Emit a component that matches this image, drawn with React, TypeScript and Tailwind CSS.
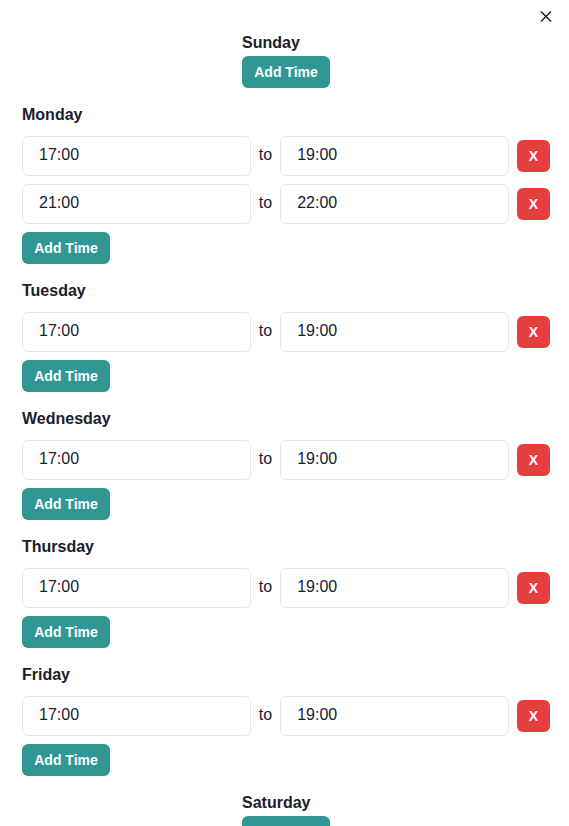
import React, { useState } from "react";

type Slot = { from: string; to: string };

const initial: { day: string; slots: Slot[] }[] = [
  { day: "Sunday", slots: [] },
  { day: "Monday", slots: [{ from: "17:00", to: "19:00" }, { from: "21:00", to: "22:00" }] },
  { day: "Tuesday", slots: [{ from: "17:00", to: "19:00" }] },
  { day: "Wednesday", slots: [{ from: "17:00", to: "19:00" }] },
  { day: "Thursday", slots: [{ from: "17:00", to: "19:00" }] },
  { day: "Friday", slots: [{ from: "17:00", to: "19:00" }] },
  { day: "Saturday", slots: [] },
];

export default function App() {
  const [days, setDays] = useState(initial);

  const addTime = (i: number) => {
    setDays((d) => d.map((x, j) => (j === i ? { ...x, slots: [...x.slots, { from: "17:00", to: "19:00" }] } : x)));
  };

  const removeTime = (i: number, k: number) => {
    setDays((d) => d.map((x, j) => (j === i ? { ...x, slots: x.slots.filter((_, n) => n !== k) } : x)));
  };

  return (
    <div className="relative min-h-screen bg-white font-['Liberation_Sans',Arial,sans-serif] text-[#1a202c]">
      {/* close */}
      <button className="absolute top-[10px] right-[17px] w-3 h-3 flex items-center justify-center">
        <svg width="13" height="13" viewBox="0 0 13 13" fill="none" stroke="#1a202c" strokeWidth="1.6">
          <path d="M1 1 L12 12 M12 1 L1 12" />
        </svg>
      </button>

      <div className="flex flex-col gap-[15px] pl-[22px] pr-[19px] pt-[31px] pb-6">
        {days.map((d, i) => {
          const empty = d.slots.length === 0;
          if (empty) {
            return (
              <div key={d.day} className="flex justify-center">
                <div className="flex flex-col items-start gap-[1px]">
                  <h3 className="text-base leading-6 font-bold">{d.day}</h3>
                  <button
                    onClick={() => addTime(i)}
                    className="h-8 w-[88px] rounded-md bg-[#319795] text-white text-sm font-bold"
                  >
                    Add Time
                  </button>
                </div>
              </div>
            );
          }
          return (
            <div key={d.day} className="flex flex-col">
              <h3 className="text-base leading-6 font-bold mb-[9px]">{d.day}</h3>
              <div className="flex flex-col gap-2">
                {d.slots.map((s, k) => (
                  <div key={k} className="flex items-center gap-2">
                    <input
                      defaultValue={s.from}
                      className="flex-1 min-w-0 h-10 px-4 pb-[2px] rounded-md border border-[#e2e8f0] text-base outline-none"
                    />
                    <span className="text-base pb-[2px]">to</span>
                    <input
                      defaultValue={s.to}
                      className="flex-1 min-w-0 h-10 px-4 pb-[2px] rounded-md border border-[#e2e8f0] text-base outline-none"
                    />
                    <button
                      onClick={() => removeTime(i, k)}
                      className="h-8 w-[33px] rounded-md bg-[#e53e3e] text-white text-sm font-bold"
                    >
                      X
                    </button>
                  </div>
                ))}
                <button
                  onClick={() => addTime(i)}
                  className="h-8 w-[88px] rounded-md bg-[#319795] text-white text-sm font-bold pb-[1px]"
                >
                  Add Time
                </button>
              </div>
            </div>
          );
        })}
      </div>
    </div>
  );
}
